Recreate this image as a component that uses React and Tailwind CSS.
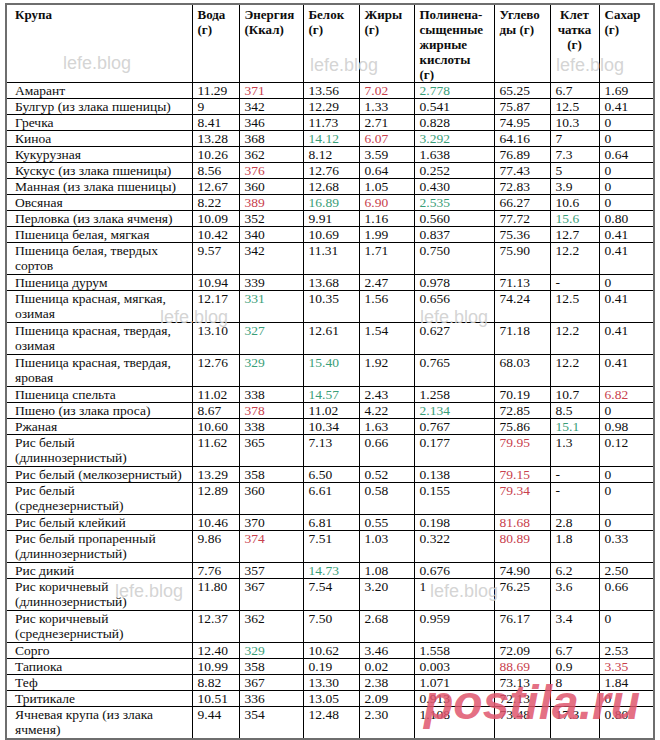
import React from "react";

const RED = "text-[#c8404c]";
const GREEN = "text-[#3a9e78]";

const rows = [
  [["Амарант"], "11.29", "r:371", "13.56", "r:7.02", "g:2.778", "65.25", "6.7", "1.69"],
  [["Булгур (из злака пшеницы)"], "9", "342", "12.29", "1.33", "0.541", "75.87", "12.5", "0.41"],
  [["Гречка"], "8.41", "346", "11.73", "2.71", "0.828", "74.95", "10.3", "0"],
  [["Киноа"], "13.28", "368", "g:14.12", "r:6.07", "g:3.292", "64.16", "7", "0"],
  [["Кукурузная"], "10.26", "362", "8.12", "3.59", "1.638", "76.89", "7.3", "0.64"],
  [["Кускус (из злака пшеницы)"], "8.56", "r:376", "12.76", "0.64", "0.252", "77.43", "5", "0"],
  [["Манная (из злака пшеницы)"], "12.67", "360", "12.68", "1.05", "0.430", "72.83", "3.9", "0"],
  [["Овсяная"], "8.22", "r:389", "g:16.89", "r:6.90", "g:2.535", "66.27", "10.6", "0"],
  [["Перловка (из злака ячменя)"], "10.09", "352", "9.91", "1.16", "0.560", "77.72", "g:15.6", "0.80"],
  [["Пшеница белая, мягкая"], "10.42", "340", "10.69", "1.99", "0.837", "75.36", "12.7", "0.41"],
  [["Пшеница белая, твердых", "сортов"], "9.57", "342", "11.31", "1.71", "0.750", "75.90", "12.2", "0.41"],
  [["Пшеница дурум"], "10.94", "339", "13.68", "2.47", "0.978", "71.13", "-", "0"],
  [["Пшеница красная, мягкая,", "озимая"], "12.17", "g:331", "10.35", "1.56", "0.656", "74.24", "12.5", "0.41"],
  [["Пшеница красная, твердая,", "озимая"], "13.10", "g:327", "12.61", "1.54", "0.627", "71.18", "12.2", "0.41"],
  [["Пшеница красная, твердая,", "яровая"], "12.76", "g:329", "g:15.40", "1.92", "0.765", "68.03", "12.2", "0.41"],
  [["Пшеница спельта"], "11.02", "338", "g:14.57", "2.43", "1.258", "70.19", "10.7", "r:6.82"],
  [["Пшено (из злака проса)"], "8.67", "r:378", "11.02", "4.22", "g:2.134", "72.85", "8.5", "0"],
  [["Ржаная"], "10.60", "338", "10.34", "1.63", "0.767", "75.86", "g:15.1", "0.98"],
  [["Рис белый", "(длиннозернистый)"], "11.62", "365", "7.13", "0.66", "0.177", "r:79.95", "1.3", "0.12"],
  [["Рис белый (мелкозернистый)"], "13.29", "358", "6.50", "0.52", "0.138", "r:79.15", "-", "0"],
  [["Рис белый", "(среднезернистый)"], "12.89", "360", "6.61", "0.58", "0.155", "r:79.34", "-", "0"],
  [["Рис белый клейкий"], "10.46", "370", "6.81", "0.55", "0.198", "r:81.68", "2.8", "0"],
  [["Рис белый пропаренный", "(длиннозернистый)"], "9.86", "r:374", "7.51", "1.03", "0.322", "r:80.89", "1.8", "0.33"],
  [["Рис дикий"], "7.76", "357", "g:14.73", "1.08", "0.676", "74.90", "6.2", "2.50"],
  [["Рис коричневый", "(длиннозернистый)"], "11.80", "367", "7.54", "3.20", "1", "76.25", "3.6", "0.66"],
  [["Рис коричневый", "(среднезернистый)"], "12.37", "362", "7.50", "2.68", "0.959", "76.17", "3.4", "0"],
  [["Сорго"], "12.40", "g:329", "10.62", "3.46", "1.558", "72.09", "6.7", "2.53"],
  [["Тапиока"], "10.99", "358", "0.19", "0.02", "0.003", "r:88.69", "0.9", "r:3.35"],
  [["Теф"], "8.82", "367", "13.30", "2.38", "1.071", "73.13", "8", "1.84"],
  [["Тритикале"], "10.51", "336", "13.05", "2.09", "0.913", "72.13", "-", "0"],
  [["Ячневая крупа (из злака", "ячменя)"], "9.44", "354", "12.48", "2.30", "1.108", "73.48", "17.3", "0.80"],
];

const widths = ["w-[186px]", "w-[47px]", "w-[64px]", "w-[56px]", "w-[55px]", "w-[80px]", "w-[56px]", "w-[49px]", "w-[55px]"];

const headers = [
  ["Крупа"],
  ["Вода", "(г)"],
  ["Энергия", "(Ккал)"],
  ["Белок", "(г)"],
  ["Жиры", "(г)"],
  ["Полинена-", "сыщенные", "жирные", "кислоты", "(г)"],
  ["Углево", "ды (г)"],
  ["Клет", "чатка", "(г)"],
  ["Сахар", "(г)"],
];

const Lines = ({ lines }) =>
  lines.map((l, i) => (
    <React.Fragment key={i}>
      {i > 0 && <br />}
      {l}
    </React.Fragment>
  ));

const Cell = ({ value }) => {
  const [tone, text] = value.includes(":") ? value.split(":") : ["", value];
  return (
    <td className={`border border-black px-[5px] py-0 align-top ${tone === "r" ? RED : tone === "g" ? GREEN : ""}`}>
      {text}
    </td>
  );
};

const Mark = ({ className }) => (
  <span className={`absolute font-[family-name:'Liberation_Sans',Arial,sans-serif] text-[18px] leading-none text-[#cfcfcf]/90 ${className}`}>
    lefe.blog
  </span>
);

export default function App() {
  return (
    <div className="relative w-[660px] h-[740px] bg-white font-[family-name:'Liberation_Serif','Times_New_Roman',serif] text-[13.5px] leading-[15px] text-[#0d0d0d]">
      <table className="ml-[5px] mt-[3px] table-fixed border-collapse border-2 border-[#6e6e6e]">
        <colgroup>
          {widths.map((w, i) => (
            <col key={i} className={w} />
          ))}
        </colgroup>
        <thead>
          <tr className="h-[78px]">
            {headers.map((h, i) => (
              <th
                key={i}
                className={`border border-black px-[5px] pt-[2px] align-top font-bold text-[13px] ${i === 0 ? "pl-[8px]" : ""} ${i === 7 ? "text-center" : "text-left"}`}
              >
                <Lines lines={h} />
              </th>
            ))}
          </tr>
        </thead>
        <tbody>
          {rows.map(([name, ...vals], r) => (
            <tr key={r} className={name.length > 1 ? "h-[32px]" : "h-[16px]"}>
              <td className="border border-black pl-[8px] pr-[4px] py-0 align-top whitespace-nowrap">
                <Lines lines={name} />
              </td>
              {vals.map((v, i) => (
                <Cell key={i} value={v} />
              ))}
            </tr>
          ))}
        </tbody>
      </table>

      <Mark className="left-[63px] top-[51px]" />
      <Mark className="left-[310px] top-[53px]" />
      <Mark className="left-[556px] top-[53px]" />
      <Mark className="left-[160px] top-[305px]" />
      <Mark className="left-[420px] top-[305px]" />
      <Mark className="left-[115px] top-[579px]" />
      <Mark className="left-[430px] top-[579px]" />

      <span className="absolute left-[424px] top-[676px] font-[family-name:'Liberation_Sans',Arial,sans-serif] text-[48px] font-bold italic leading-none text-[#e0566e]/85">
        postila.ru
      </span>
    </div>
  );
}
